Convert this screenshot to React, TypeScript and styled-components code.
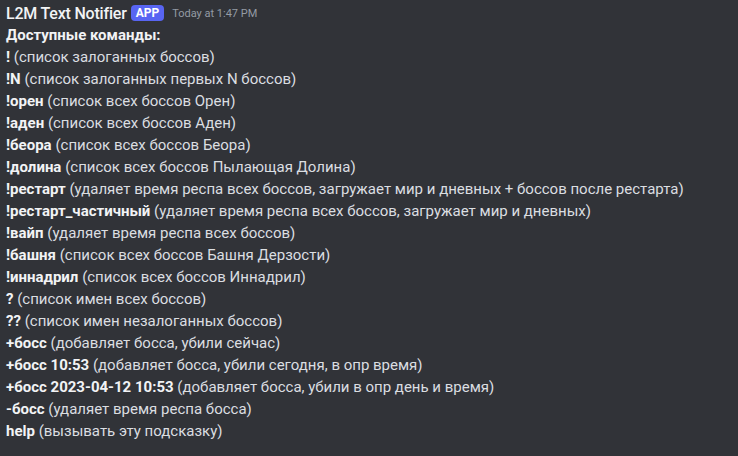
import styled, { createGlobalStyle } from 'styled-components';

const GlobalStyle = createGlobalStyle`
  html, body {
    margin: 0;
    padding: 0;
    background: #313338;
  }
`;

type Command = { cmd: string; desc: string };

const COMMANDS: Command[] = [
  { cmd: '!', desc: '(список залоганных боссов)' },
  { cmd: '!N', desc: '(список залоганных первых N боссов)' },
  { cmd: '!орен', desc: '(список всех боссов Орен)' },
  { cmd: '!аден', desc: '(список всех боссов Аден)' },
  { cmd: '!беора', desc: '(список всех боссов Беора)' },
  { cmd: '!долина', desc: '(список всех боссов Пылающая Долина)' },
  {
    cmd: '!рестарт',
    desc: '(удаляет время респа всех боссов, загружает мир и дневных + боссов после рестарта)',
  },
  {
    cmd: '!рестарт_частичный',
    desc: '(удаляет время респа всех боссов, загружает мир и дневных)',
  },
  { cmd: '!вайп', desc: '(удаляет время респа всех боссов)' },
  { cmd: '!башня', desc: '(список всех боссов Башня Дерзости)' },
  { cmd: '!иннадрил', desc: '(список всех боссов Иннадрил)' },
  { cmd: '?', desc: '(список имен всех боссов)' },
  { cmd: '??', desc: '(список имен незалоганных боссов)' },
  { cmd: '+босс', desc: '(добавляет босса, убили сейчас)' },
  { cmd: '+босс 10:53', desc: '(добавляет босса, убили сегодня, в опр время)' },
  { cmd: '+босс 2023-04-12 10:53', desc: '(добавляет босса, убили в опр день и время)' },
  { cmd: '-босс', desc: '(удаляет время респа босса)' },
  { cmd: 'help', desc: '(вызывать эту подсказку)' },
];

const App = () => {
  return (
    <>
      <GlobalStyle />
      <Message>
        <Header>
          <Username>L2M Text Notifier</Username>
          <AppBadge>APP</AppBadge>
          <Timestamp>Today at 1:47 PM</Timestamp>
        </Header>
        <Content>
          <Line>
            <Strong>Доступные команды:</Strong>
          </Line>
          {COMMANDS.map((c) => (
            <Line key={c.cmd}>
              <Strong>{c.cmd}</Strong> {c.desc}
            </Line>
          ))}
        </Content>
      </Message>
    </>
  );
};

export default App;

const Message = styled.div`
  width: 738px;
  height: 456px;
  box-sizing: border-box;
  padding: 2px 6px 0;
  background: #313338;
  font-family: Roboto, 'Noto Sans', sans-serif;
  color: #dbdee1;
  overflow: hidden;
`;

const Header = styled.div`
  display: flex;
  align-items: center;
  height: 22px;
`;

const Username = styled.span`
  font-size: 16px;
  font-weight: 500;
  letter-spacing: -0.2px;
  color: #f2f3f5;
`;

const AppBadge = styled.span`
  margin-left: 4px;
  height: 16px;
  padding: 0 5px;
  border-radius: 4px;
  background: #5865f2;
  color: #ffffff;
  font-size: 12px;
  font-weight: 700;
  display: flex;
  align-items: center;
`;

const Timestamp = styled.span`
  margin-left: 8px;
  font-size: 11px;
  color: #949ba4;
`;

const Content = styled.div`
  display: flex;
  flex-direction: column;
`;

const Line = styled.div`
  font-size: 15px;
  line-height: 22px;
  white-space: nowrap;
`;

const Strong = styled.strong`
  font-weight: 700;
  color: #f2f3f5;
`;
